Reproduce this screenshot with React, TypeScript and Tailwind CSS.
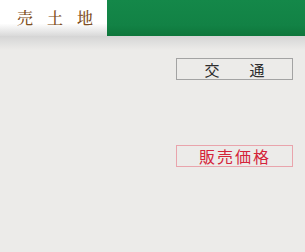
export default function App() {
  return (
    <div className="w-[305px] h-[252px] bg-[#ecebe9] overflow-hidden">
      {/* header bar */}
      <div className="flex h-[36px]">
        <div className="w-[107px] flex items-center pl-[17px] bg-linear-to-b from-white via-white via-65% to-[#d9d9d9]">
          <span
            className="text-[16px] leading-none font-medium tracking-[14px] text-[#7e4e22]"
            style={{ fontFamily: '"Noto Serif CJK JP", "Noto Sans CJK JP", serif' }}
          >
            売土地
          </span>
        </div>
        <div className="flex-1 bg-linear-to-b from-[#148849] via-[#128245] via-70% to-[#0e763b]" />
      </div>
      <div className="h-[14px] bg-linear-to-b from-[#d5d5d5] to-[#ecebe9]" />

      <div className="flex flex-col items-end pr-[12px] pt-[8px] gap-[65px]" style={{ fontFamily: '"Noto Sans CJK JP", sans-serif' }}>
        <div className="w-[117px] h-[22px] border border-[#a3a3a3] flex items-center justify-center text-[15px] leading-none text-[#2e2e2e]">
          交　　通
        </div>
        <div className="w-[117px] h-[22px] border border-[#e9a4ac] flex items-center justify-center text-[16px] leading-none tracking-[2px] text-[#d4243a] pl-[1px]">
          販売価格
        </div>
      </div>
    </div>
  );
}
